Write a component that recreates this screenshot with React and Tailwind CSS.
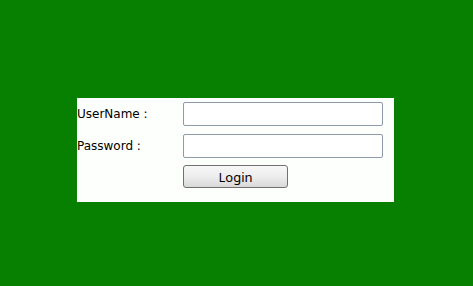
import React from 'react';

export default function App() {
  return (
    <div className="w-[473px] h-[286px] bg-[#077f01] pt-[98px] pl-[77px]">
      <div className="w-[317px] h-[104px] bg-[#fdfffd] pt-[4px] font-['DejaVu_Sans',sans-serif] text-[12px] text-black">
        <div className="flex items-center h-[24px]">
          <label className="w-[106px]">UserName :</label>
          <input className="w-[200px] h-[24px] border border-[#8e9aa6] rounded-[2px] bg-white outline-none" />
        </div>
        <div className="flex items-center h-[24px] mt-[8px]">
          <label className="w-[106px]">Password :</label>
          <input type="password" className="w-[200px] h-[24px] border border-[#8e9aa6] rounded-[2px] bg-white outline-none" />
        </div>
        <div className="flex mt-[7px] pl-[106px]">
          <button className="w-[105px] h-[23px] border border-[#707070] rounded-[3px] bg-gradient-to-b from-[#f7f7f7] via-[#ededed] to-[#d9d9d9] font-['Noto_Sans',sans-serif] text-[13px] leading-none text-black pt-[1px]">
            Login
          </button>
        </div>
      </div>
    </div>
  );
}
